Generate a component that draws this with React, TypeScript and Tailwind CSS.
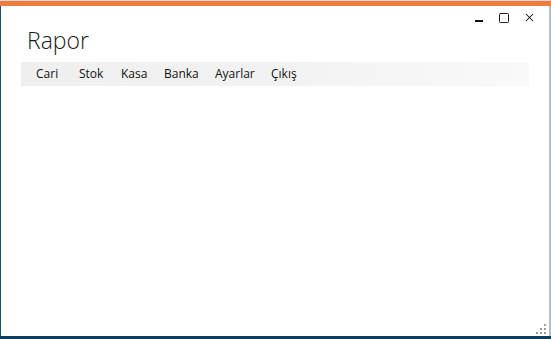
import { Square, X } from "lucide-react";

const menuItems = [
  { label: "Cari", w: "w-[43px]" },
  { label: "Stok", w: "w-[42px]" },
  { label: "Kasa", w: "w-[43px]" },
  { label: "Banka", w: "w-[51px]" },
  { label: "Ayarlar", w: "w-[56px]" },
  { label: "Çıkış", w: "w-[50px]" },
];

export default function App() {
  return (
    <div className="flex h-[339px] w-[551px] flex-col overflow-hidden bg-white font-['Segoe_UI','Open_Sans',sans-serif]">
      <div className="h-px bg-[#d9d9d9]" />
      <div className="h-[5px] bg-[#ef7b3e]" />
      <div className="flex flex-1">
        <div className="w-px bg-[#1c4f74]" />
        <div className="flex flex-1 flex-col">
          {/* window controls */}
          <div className="flex h-[18px] items-end justify-end pr-[13px] text-[#111]">
            <span className="mb-[2px] mr-[15px] h-[2px] w-[8px] bg-[#111]" />
            <Square className="mr-[13px] h-[12px] w-[12px]" strokeWidth={1.9} />
            <X className="h-[13px] w-[13px]" strokeWidth={1.9} />
          </div>
          <div className="pl-[26px] pt-[2px] text-[23px] font-light leading-[28px] text-[#1a1a1a]">Rapor</div>
          <div className="ml-[20px] mr-[20px] mt-[8px] flex h-[24px] items-center bg-gradient-to-r from-[#efefef] via-[#f2f2f2] to-[#f9f9f9] pl-[15px] text-[12px] text-[#111]">
            {menuItems.map((item) => (
              <span key={item.label} className={item.w}>
                {item.label}
              </span>
            ))}
          </div>
          <div className="relative flex-1">
            <div className="absolute bottom-[2px] right-[3px] grid grid-cols-3 gap-[2px]">
              {[0, 1, 2, 3, 4, 5, 6, 7, 8].map((i) => (
                <span
                  key={i}
                  className={i === 0 || i === 1 || i === 3 ? "h-[2px] w-[2px]" : "h-[2px] w-[2px] bg-[#9a9a9a]"}
                />
              ))}
            </div>
          </div>
        </div>
        <div className="w-[2px] bg-[#b8bcc4]" />
      </div>
      <div className="h-[3px] bg-[#0f3d60]" />
    </div>
  );
}
